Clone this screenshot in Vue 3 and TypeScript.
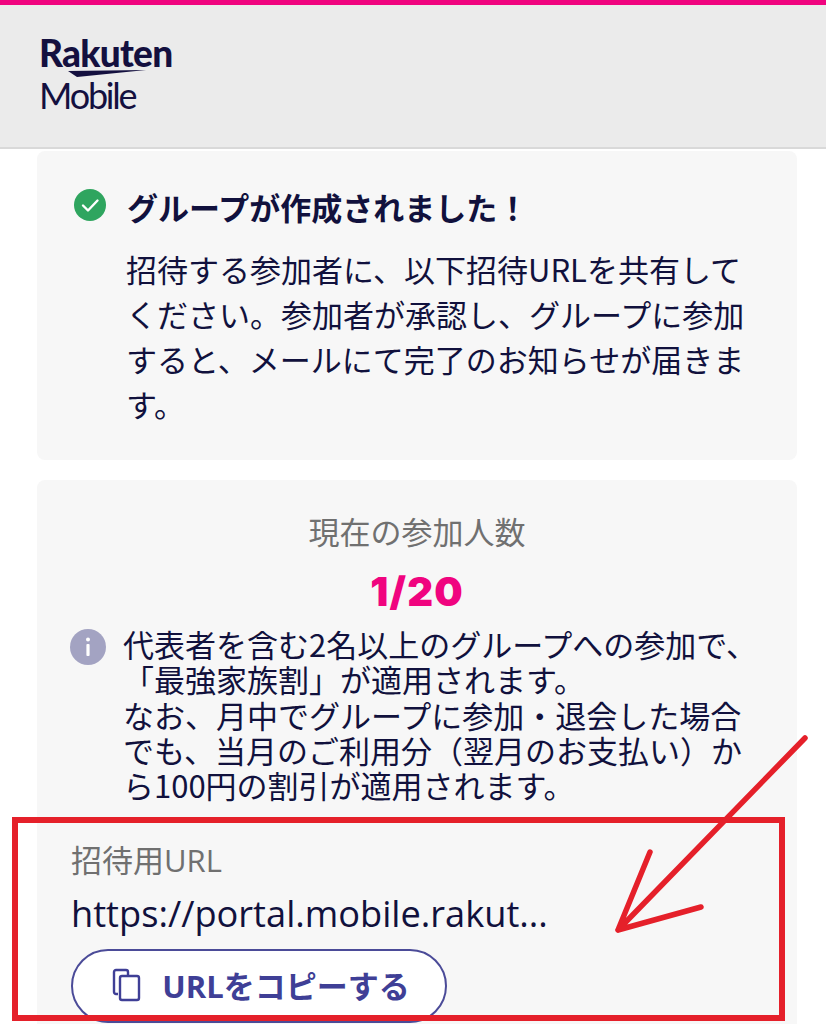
<script setup lang="ts">
const sections: string[] = ['代表者を含む2名以上のグループへの参加で、', '「最強家族割」が適用されます。', 'なお、月中でグループに参加・退会した場合', 'でも、当月のご利用分（翌月のお支払い）か', 'ら100円の割引が適用されます。']
const intro: string[] = ['招待する参加者に、以下招待URLを共有して', 'ください。参加者が承認し、グループに参加', 'すると、メールにて完了のお知らせが届きま', 'す。']
</script>

<template>
  <div class="page">
    <header class="header">
      <div class="logo">
        <span class="logo-top">Rakuten</span>
        <svg class="swoosh" width="80" height="8" viewBox="0 0 80 8"><polygon points="0,1 78,0 9,7" fill="#14103f" /></svg>
        <span class="logo-bottom">Mobile</span>
      </div>
    </header>
    <main class="main">
      <section class="card first">
        <div class="title-row">
          <svg class="check" width="32" height="32" viewBox="0 0 32 32">
            <circle cx="16" cy="16" r="16" fill="#2fa55f" />
            <path d="M9 16.5l5 5 9.5-10" fill="none" stroke="#fff" stroke-width="2.4" stroke-linecap="round" stroke-linejoin="round" />
          </svg>
          <h1 class="title">グループが作成されました！</h1>
        </div>
        <p class="intro"><span v-for="l in intro" :key="l" class="line">{{ l }}</span></p>
      </section>
      <section class="card second">
        <div class="count-label">現在の参加人数</div>
        <div class="count">1/20</div>
        <div class="note">
          <svg class="info" width="36" height="36" viewBox="0 0 36 36">
            <circle cx="18" cy="18" r="18" fill="#a3a3c2" />
            <rect x="16.4" y="15" width="3.2" height="12" rx="1" fill="#fff" />
            <circle cx="18" cy="10.5" r="2" fill="#fff" />
          </svg>
          <p class="note-text"><span v-for="l in sections" :key="l" class="line">{{ l }}</span></p>
        </div>
        <div class="url-label">招待用URL</div>
        <div class="url">https://portal.mobile.rakut...</div>
        <button class="copy" type="button">
          <svg width="30" height="34" viewBox="0 0 30 34" fill="none" stroke="#3f3f96" stroke-width="2.4" stroke-linejoin="round">
            <path d="M6 26H4a2 2 0 0 1-2-2V4a2 2 0 0 1 2-2h10a2 2 0 0 1 2 2v3" />
            <rect x="8" y="8" width="19" height="24" rx="2" fill="#fff" />
          </svg>
          <span>URLをコピーする</span>
        </button>
      </section>
    </main>
    <svg class="annotation" width="826" height="1024" viewBox="0 0 826 1024" fill="none" stroke="#e5202a">
      <rect x="15" y="820" width="767" height="198" stroke-width="6" />
      <path d="M805 738L618 930M650 852L618 930L701 907" stroke-width="5.5" stroke-linecap="round" stroke-linejoin="round" />
    </svg>
  </div>
</template>

<style>
body { margin: 0; background: #fff; }
</style>

<style scoped>
.page {
  position: relative;
  width: 826px;
  height: 1024px;
  overflow: hidden;
  background: #fff;
  color: #11113d;
  font-family: "Open Sans", "Noto Sans CJK JP", sans-serif;
}
.header {
  box-sizing: border-box;
  height: 149px;
  border-top: 5px solid #f0047f;
  border-bottom: 2px solid #d9d9d9;
  background: #ebebeb;
  padding: 29px 0 0 39px;
}
.logo { display: flex; flex-direction: column; align-items: flex-start; color: #14103f; font-family: Lato, sans-serif; }
.logo-top { font-size: 37px; font-weight: 900; line-height: 37px; letter-spacing: -0.7px; }
.swoosh { margin: -1px 0 0 29px; }
.logo-bottom { font-size: 36px; font-weight: 400; line-height: 36px; letter-spacing: -2.2px; margin-top: -1px; }
.main { display: flex; flex-direction: column; gap: 20px; padding: 2px 29px 0 37px; }
.card { background: #f7f7f7; border-radius: 8px; }
.first { box-sizing: border-box; height: 309px; padding: 36px 36px 0; }
.title-row { display: flex; align-items: center; gap: 21px; height: 40px; }
.check { flex: none; margin-top: -5px; margin-left: 1px; }
.title { margin: 0; font-size: 31px; font-weight: 700; line-height: 40px; font-family: "Noto Sans CJK JP", sans-serif; }
.intro { margin: 19px 0 0 53px; font-size: 31px; line-height: 45px; font-family: "Noto Sans CJK JP", sans-serif; }
.line { display: block; white-space: nowrap; }
.second { box-sizing: border-box; height: 600px; padding: 29px 34px 0; }
.count-label { text-align: center; font-size: 31px; line-height: 44px; color: #707070; font-family: "Noto Sans CJK JP", sans-serif; }
.count { text-align: center; font-family: Inter, sans-serif; font-size: 40px; font-weight: 900; line-height: 48px; color: #f0047f; margin-top: 15px; letter-spacing: 1.2px; }
.note { display: flex; gap: 17px; margin-top: 10px; margin-left: -1px; }
.info { flex: none; margin-top: 3px; }
.note-text { margin: 0; font-size: 31px; line-height: 35.3px; font-family: "Noto Sans CJK JP", sans-serif; white-space: nowrap; }
.url-label { margin-top: 37px; font-size: 31px; line-height: 42px; color: #707070; }
.url { margin-top: 10px; font-size: 36.2px; line-height: 44px; white-space: nowrap; }
.copy {
  display: flex;
  align-items: center;
  justify-content: center;
  gap: 20px;
  box-sizing: border-box;
  width: 376px;
  height: 74px;
  margin-top: 14px;
  padding: 0 0 3px 4px;
  background: #fff;
  border: 2px solid #4b4b98;
  border-radius: 37px;
  color: #3f3f96;
  font-family: "Open Sans", "Noto Sans CJK JP", sans-serif;
  font-size: 31px;
  font-weight: 700;
}
.annotation { position: absolute; inset: 0; pointer-events: none; }
</style>
